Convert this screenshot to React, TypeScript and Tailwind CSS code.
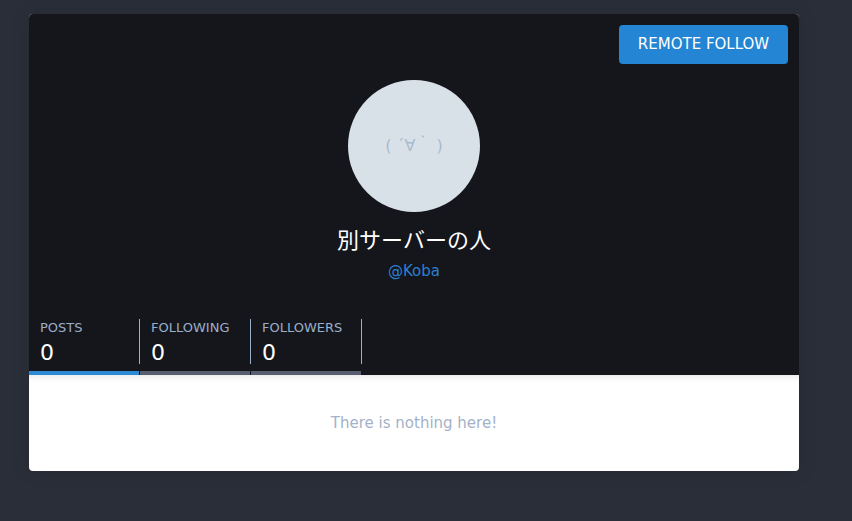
const stats = [
  { label: "POSTS", count: "0", active: true },
  { label: "FOLLOWING", count: "0", active: false },
  { label: "FOLLOWERS", count: "0", active: false },
];

export default function App() {
  return (
    <div className="h-[521px] w-[852px] overflow-hidden bg-[#2a2e38] pt-[14px] pl-[29px] font-['DejaVu_Sans','Noto_Sans_CJK_JP',sans-serif]">
      <div className="w-[770px] overflow-hidden rounded bg-white shadow-[0_0_20px_rgba(0,0,0,0.1)]">
        <div className="relative h-[361px] bg-[#15161c]">
          <button className="absolute top-[11px] right-[11px] h-[39px] w-[169px] rounded bg-[#2385d3] text-[15px] text-white">
            REMOTE FOLLOW
          </button>
          <div className="flex flex-col items-center pt-[66px]">
            <div className="flex h-[132px] w-[132px] items-center justify-center rounded-full bg-[#d9e1e8] text-[16px] text-[#a9bad0]">
              ( ´∀｀ )
            </div>
            <div className="mt-[16px] text-[22px] leading-[26px] text-white">別サーバーの人</div>
            <div className="mt-[8px] text-[15px] leading-[18px] text-[#2b7fd0]">@Koba</div>
          </div>
          <div className="absolute bottom-0 left-0 flex">
            {stats.map((stat) => (
              <div key={stat.label} className="w-[111px]">
                <div className="h-[45px] border-r border-[#9baec8] pl-[11px] pt-[1px]">
                  <div className="text-[13px] leading-[16px] text-[#9baec8]">{stat.label}</div>
                  <div className="mt-[4px] text-[22px] leading-[25px] text-white">{stat.count}</div>
                </div>
                <div className={`mt-[7px] h-[4px] w-[110px] ${stat.active ? "bg-[#2b8ad3]" : "bg-[#565e70]"}`} />
              </div>
            ))}
          </div>
        </div>
        <div className="flex h-[96px] items-center justify-center text-[15px] text-[#a3b2c8] shadow-[inset_0_8px_8px_-8px_rgba(0,0,0,0.15)]">
          There is nothing here!
        </div>
      </div>
    </div>
  );
}
